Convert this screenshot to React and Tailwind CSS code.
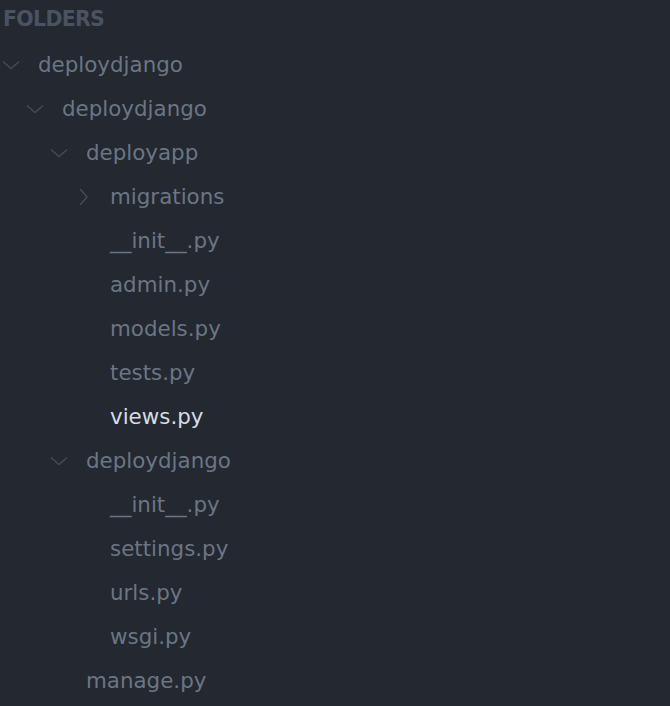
const tree = [
  { name: 'deploydjango', depth: 0, kind: 'open' },
  { name: 'deploydjango', depth: 1, kind: 'open' },
  { name: 'deployapp', depth: 2, kind: 'open' },
  { name: 'migrations', depth: 3, kind: 'closed' },
  { name: '__init__.py', depth: 3 },
  { name: 'admin.py', depth: 3 },
  { name: 'models.py', depth: 3 },
  { name: 'tests.py', depth: 3 },
  { name: 'views.py', depth: 3, active: true },
  { name: 'deploydjango', depth: 2, kind: 'open' },
  { name: '__init__.py', depth: 3 },
  { name: 'settings.py', depth: 3 },
  { name: 'urls.py', depth: 3 },
  { name: 'wsgi.py', depth: 3 },
  { name: 'manage.py', depth: 2 },
];

const pad = ['pl-[2px]', 'pl-[26px]', 'pl-[50px]', 'pl-[74px]'];

function Chevron({ open }) {
  if (open) {
    return (
      <svg width="18" height="10" viewBox="0 0 18 10" className="shrink-0">
        <path d="M1 1.5 L9 8.5 L17 1.5" fill="none" stroke="#434b57" strokeWidth="1.6" />
      </svg>
    );
  }
  return (
    <svg width="18" height="18" viewBox="0 0 18 18" className="shrink-0">
      <path d="M6 1 L13 9 L6 17" fill="none" stroke="#434b57" strokeWidth="1.6" />
    </svg>
  );
}

export default function App() {
  return (
    <div className="w-[670px] h-[706px] bg-[#232831] overflow-hidden font-['DejaVu_Sans',sans-serif]">
      <div className="h-[42px] flex items-center pl-[3px] pb-[3px] text-[20.5px] font-bold tracking-[-0.7px] text-[#4a5360]">
        FOLDERS
      </div>
      {tree.map((item, i) => (
        <div key={i} className={`h-[44px] flex items-center pt-[2px] ${pad[item.depth]}`}>
          <div className="w-[36px] flex items-center">
            {item.kind && <Chevron open={item.kind === 'open'} />}
          </div>
          <span className={`text-[21.4px] ${item.active ? 'text-[#d5dce6]' : 'text-[#6b7684]'}`}>
            {item.name}
          </span>
        </div>
      ))}
    </div>
  );
}
